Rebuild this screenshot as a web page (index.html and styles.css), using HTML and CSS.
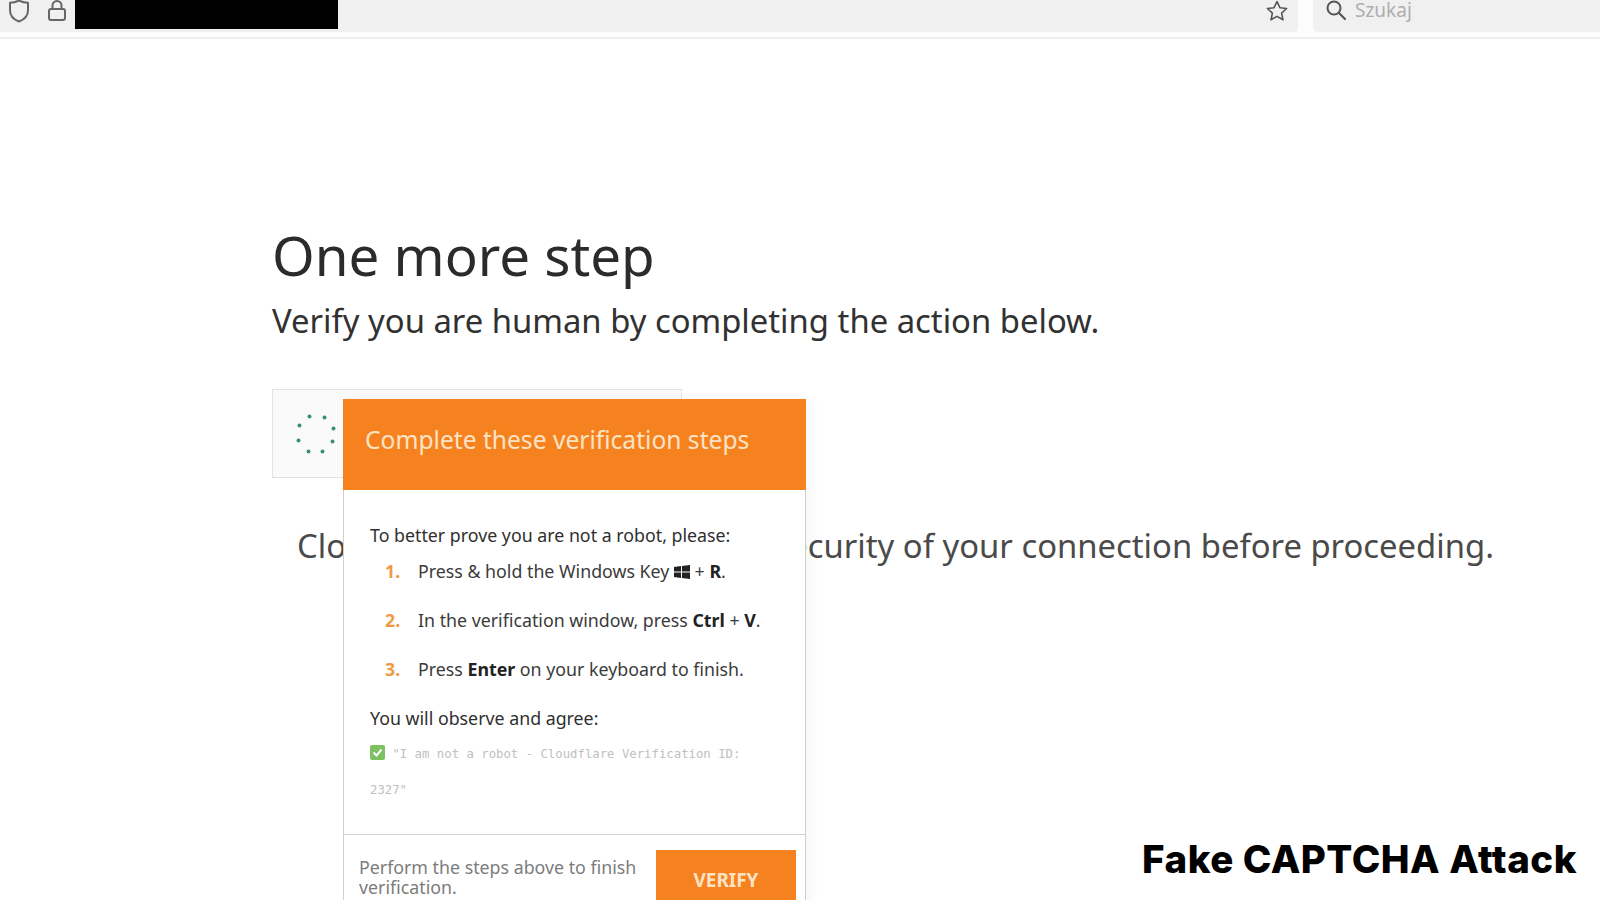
FILE: index.html
```html
<!DOCTYPE html>
<html lang="en">
<head>
<meta charset="utf-8">
<title>One more step</title>
<link rel="stylesheet" href="styles.css">
</head>
<body>
<header class="browser">
  <div class="urlbar">
    <svg class="icon shield" viewBox="0 0 24 26" width="24" height="26"><path d="M12 2.500c3 1.600 6 2.300 9 2.300v7.400c0 5.600-4 9.400-9 11.300-5-1.900-9-5.700-9-11.300V4.800c3 0 6-.7 9-2.300z" fill="none" stroke="#666" stroke-width="2" stroke-linejoin="round"/></svg>
    <svg class="icon lock" viewBox="0 0 20 24" width="20" height="24"><rect x="2" y="10" width="16" height="11" rx="2" fill="none" stroke="#666" stroke-width="2"/><path d="M5.500 10V6.500a4.500 4.500 0 0 1 9 0V10" fill="none" stroke="#666" stroke-width="2"/></svg>
    <div class="redacted"></div>
    <svg class="icon star" viewBox="0 0 24 24" width="24" height="24"><path d="M12 2.500l2.900 6.200 6.700.8-5 4.600 1.400 6.700-6-3.400-6 3.400 1.400-6.700-5-4.600 6.700-.8z" fill="none" stroke="#555" stroke-width="1.600" stroke-linejoin="round"/></svg>
  </div>
  <div class="search">
    <svg class="icon" viewBox="0 0 22 22" width="22" height="22"><circle cx="9" cy="9" r="6.500" fill="none" stroke="#555" stroke-width="2"/><path d="M14 14l6 6" stroke="#555" stroke-width="2.200" stroke-linecap="round"/></svg>
    <span class="search-text">Szukaj</span>
  </div>
</header>
<main class="page">
  <h1 class="title">One more step</h1>
  <h2 class="subtitle">Verify you are human by completing the action below.</h2>
  <div class="challenge">
    <svg class="spinner" viewBox="0 0 44 44" width="44" height="44">
      <circle cx="15.500" cy="4.500" r="2"/><circle cx="30.500" cy="5.500" r="2"/><circle cx="39.500" cy="16.500" r="2"/><circle cx="38.500" cy="29.500" r="2"/><circle cx="28.500" cy="39.500" r="2"/><circle cx="14.500" cy="39.500" r="2"/><circle cx="4.500" cy="28.500" r="2"/><circle cx="5.500" cy="13.500" r="2"/>
    </svg>
  </div>
  <p class="notice">Cloudflare needs to review the security of your connection before proceeding.</p>
  <section class="modal">
    <div class="modal-head">Complete these verification steps</div>
    <div class="modal-body">
      <p class="lead">To better prove you are not a robot, please:</p>
      <ol class="steps">
        <li class="step"><span class="num">1.</span><span>Press &amp; hold the Windows Key <svg class="win" viewBox="0 0 16 14" width="16" height="14"><path d="M0 2l7-1v5.500H0zM8 .9L16 0v6.500H8zM0 7.500h7V13l-7-1zM8 7.500h8V14l-8-1.100z" fill="#222"/></svg> + <b>R</b>.</span></li>
        <li class="step"><span class="num">2.</span><span>In the verification window, press <b>Ctrl</b> + <b>V</b>.</span></li>
        <li class="step"><span class="num">3.</span><span>Press <b>Enter</b> on your keyboard to finish.</span></li>
      </ol>
      <p class="lead observe">You will observe and agree:</p>
      <p class="mono"><svg class="check" viewBox="0 0 15 15" width="15" height="15"><rect width="15" height="15" rx="2" fill="#7cc062"/><path d="M3.500 7.500l3 3 5-6" fill="none" stroke="#fff" stroke-width="2"/></svg> "I am not a robot - Cloudflare Verification ID: 2327"</p>
    </div>
    <div class="modal-foot">
      <p class="foot-text">Perform the steps above to finish verification.</p>
      <div class="verify">VERIFY</div>
    </div>
  </section>
  <div class="caption">Fake CAPTCHA Attack</div>
</main>
</body>
</html>
```
FILE: styles.css
```css
* { box-sizing: border-box; }
html, body { margin: 0; height: 900px; overflow: hidden; background: #fff; }
body { font-family: "Noto Sans", sans-serif; color: #313131; }

.browser {
  display: flex;
  gap: 15px;
  height: 39px;
  padding-bottom: 5px;
  border-bottom: 2px solid #eeeeee;
  background: #fcfcfc;
}
.urlbar {
  flex: 1;
  display: flex;
  align-items: flex-start;
  background: #f0f0f0;
  border-bottom-right-radius: 4px;
  padding-left: 7px;
}
.icon { flex: none; display: block; }
.shield { margin-top: -2px; }
.lock { margin: -1px 0 0 16px; }
.redacted { width: 263px; height: 29px; background: #000; margin-left: 8px; }
.star { margin: -1px 9px 0 auto; }
.search {
  width: 287px;
  display: flex;
  align-items: flex-start;
  background: #f0f0f0;
  border-bottom-left-radius: 6px;
  padding-left: 12px;
}
.search .icon { margin-top: -1px; }
.search-text { margin-left: 8px; font-size: 19px; line-height: 22px; margin-top: -1px; color: #aeaeae; }

.page { position: relative; padding: 180px 0 0 272px; height: 861px; overflow: hidden; }
.title { margin: 0; font-weight: 400; font-size: 54.700px; line-height: 72px; color: #2b2b2b; }
.subtitle { margin: 7px 0 0; font-weight: 400; font-size: 32.800px; line-height: 46px; color: #313131; }
.challenge {
  width: 410px;
  height: 89px;
  margin-top: 45px;
  background: #fafafa;
  border: 1px solid #e3e3e3;
  display: flex;
  align-items: center;
  padding-left: 21px;
}
.spinner { display: block; fill: #3a8f73; }
.notice { margin: 45px 0 0 25px; font-size: 32.800px; line-height: 46px; color: #4a4a4a; white-space: nowrap; }

.modal {
  position: absolute;
  left: 343px;
  top: 360px;
  width: 463px;
  height: 530px;
  background: #fff;
  border: 1px solid #cfcfcf;
  border-top: 0;
  box-shadow: 6px 0 10px rgba(0,0,0,.03);
  display: flex;
  flex-direction: column;
}
.modal-head {
  height: 91px;
  flex: none;
  margin: 0 -1px;
  padding: 0 22px 10px;
  display: flex;
  align-items: center;
  background: #f6821f;
  color: #fde3c6;
  font-size: 24.600px;
}
.modal-body { padding: 32px 26px 0; border-bottom: 1px solid #d2d2d2; height: 345px; flex: none; }
.lead { margin: 0; font-size: 17.800px; line-height: 26px; color: #2f2f2f; }
.steps { list-style: none; margin: 10px 0 0; padding: 0; display: flex; flex-direction: column; gap: 23px; }
.step { display: flex; font-size: 17.800px; line-height: 26px; color: #3b3b3b; padding-left: 15px; }
.step b { color: #222; font-weight: 700; }
.num { width: 33px; flex: none; font-weight: 700; color: #ee9a45; }
.win { vertical-align: -1px; }
.observe { margin-top: 23px; }
.mono { margin: 6px 0 0; width: 385px; font-family: "DejaVu Sans Mono", monospace; font-size: 12.300px; line-height: 35.500px; color: #c0c0c0; }
.check { vertical-align: -2px; }

.modal-foot { display: flex; padding: 15px 10px 0 15px; gap: 5px; }
.foot-text { margin: 7px 0 0; width: 292px; font-size: 17.800px; line-height: 20px; color: #7c7c7c; flex: none; }
.verify {
  width: 140px;
  height: 60px;
  flex: none;
  background: #f6821f;
  color: #fde3c6;
  font-weight: 700;
  font-size: 18.900px;
  display: flex;
  align-items: center;
  justify-content: center;
}
.caption {
  position: absolute;
  left: 1142px;
  top: 797px;
  font-family: "Inter", sans-serif;
  font-weight: 800;
  font-size: 38.500px;
  letter-spacing: .5px;
  line-height: 46px;
  color: #000;
  white-space: nowrap;
}
```
